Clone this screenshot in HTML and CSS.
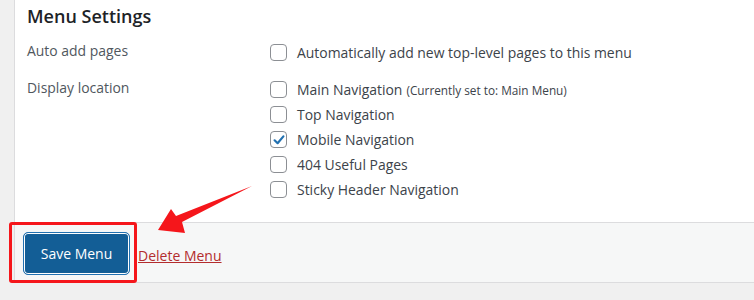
FILE: index.html
```html
<!DOCTYPE html>
<html>
<head>
<meta charset="utf-8">
<link rel="stylesheet" href="styles.css">
</head>
<body>
<div class="panel">
  <div class="content">
    <h3 class="title">Menu Settings</h3>
    <div class="settings">
      <div class="label">Auto add pages</div>
      <div class="options">
        <label class="opt"><span class="cb"></span>Automatically add new top-level pages to this menu</label>
      </div>
      <div class="label loc">Display location</div>
      <div class="options list">
        <label class="opt"><span class="cb"></span>Main Navigation <span class="note">(Currently set to: Main Menu)</span></label>
        <label class="opt"><span class="cb"></span>Top Navigation</label>
        <label class="opt"><span class="cb checked"><svg viewBox="0 0 16 16" width="16" height="16"><path d="M3.6 8.3 L6.6 11.2 L12.4 4.4" fill="none" stroke="#2271b1" stroke-width="2.2" stroke-linecap="round" stroke-linejoin="round"/></svg></span>Mobile Navigation</label>
        <label class="opt"><span class="cb"></span>404 Useful Pages</label>
        <label class="opt"><span class="cb"></span>Sticky Header Navigation</label>
      </div>
    </div>
  </div>
  <div class="footer">
    <button class="save">Save Menu</button>
    <a class="delete" href="#">Delete Menu</a>
  </div>
</div>
<div class="highlight"></div>
<svg class="arrow" width="754" height="300" viewBox="0 0 754 300"><polygon points="158,230 171,209 176,216 252,186 182,222 185,233" fill="#f5161b"/></svg>
</body>
</html>
```

FILE: styles.css
```css
html, body {
  margin: 0;
  padding: 0;
}
body {
  background: #f0f0f0;
  font-family: "Open Sans", "Noto Sans", sans-serif;
  color: #3c434a;
  width: 754px;
  height: 300px;
  overflow: hidden;
  position: relative;
}
.panel {
  margin-left: 14px;
  border-left: 1px solid #dcdcde;
  background: #fff;
}
.content {
  padding: 3px 12px 0 12px;
  height: 219px;
}
.title {
  margin: 0;
  font-size: 18px;
  font-weight: 600;
  color: #1d2327;
  line-height: 26px;
}
.settings {
  display: grid;
  grid-template-columns: 243px 1fr;
  margin-top: 11px;
  font-size: 13.95px;
}
.label {
  line-height: 22px;
  color: #50575e;
}
.loc {
  margin-top: 12px;
}
.options.list {
  margin-top: 12px;
}
.opt {
  display: flex;
  align-items: center;
  height: 25px;
  line-height: 22px;
  color: #3c434a;
  white-space: nowrap;
}
.settings > .options:first-of-type .opt {
  height: 22px;
}
.cb {
  display: inline-block;
  box-sizing: border-box;
  width: 17px;
  height: 17px;
  border: 1px solid #8c8f94;
  border-radius: 4px;
  margin-right: 10px;
  flex: none;
  position: relative;
}
.cb svg {
  position: absolute;
  left: 0;
  top: 0;
}
.note {
  font-size: 11.8px;
  margin-left: 4px;
}
.footer {
  background: #f6f7f7;
  border-top: 1px solid #dcdcde;
  border-bottom: 1px solid #dcdcde;
  height: 61px;
  display: flex;
  align-items: center;
  padding-left: 8px;
  box-sizing: border-box;
}
.save {
  width: 107px;
  height: 43px;
  margin-top: 2px;
  background: #135e96;
  color: #fff;
  border: 1px solid #2271b1;
  border-radius: 5px;
  font-family: inherit;
  font-size: 14px;
  box-shadow: 0 0 0 1px #fff inset, 0 0 0 2px #135e96 inset;
  box-sizing: border-box;
  margin-left: 0;
}
.delete {
  color: #b32d2e;
  font-size: 14px;
  margin-left: 8px;
  margin-top: 6px;
}
.highlight {
  position: absolute;
  left: 9px;
  top: 222px;
  width: 128px;
  height: 61px;
  box-sizing: border-box;
  border: 3px solid #f5161b;
  border-radius: 3px;
}
.arrow {
  position: absolute;
  left: 0;
  top: 0;
  pointer-events: none;
}
```
